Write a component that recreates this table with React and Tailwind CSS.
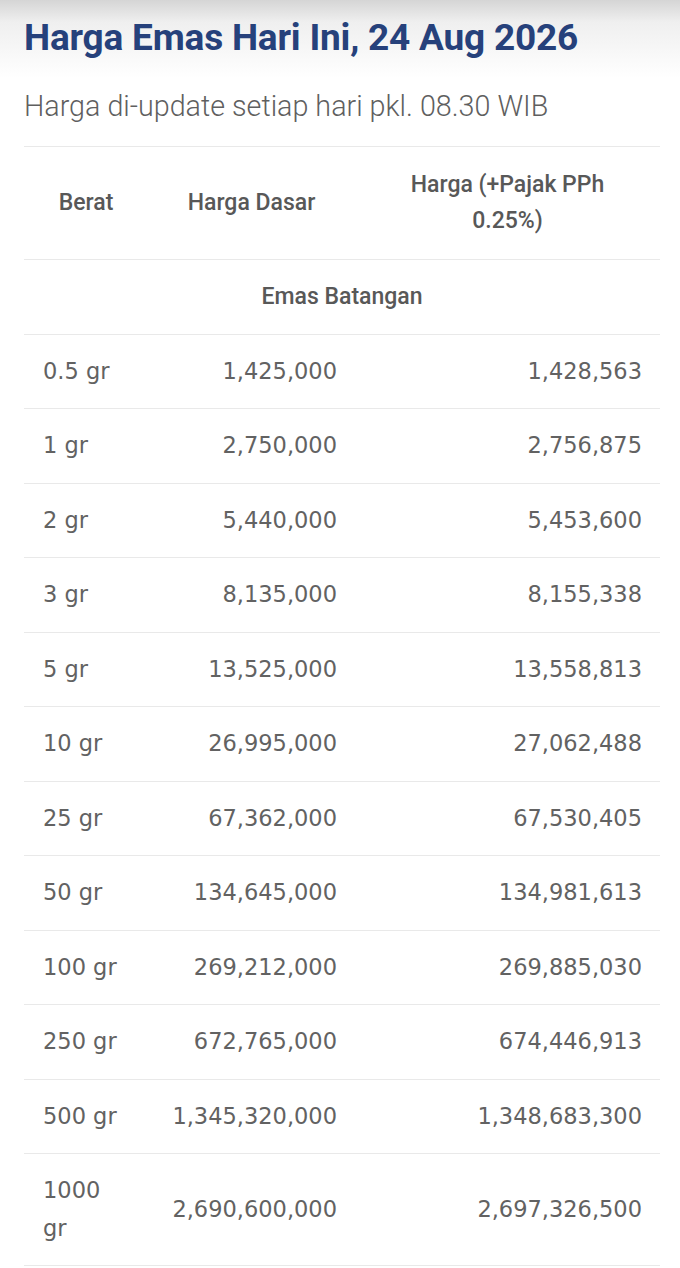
import React from 'react';

const rows = [
  ['0.5 gr', '1,425,000', '1,428,563'],
  ['1 gr', '2,750,000', '2,756,875'],
  ['2 gr', '5,440,000', '5,453,600'],
  ['3 gr', '8,135,000', '8,155,338'],
  ['5 gr', '13,525,000', '13,558,813'],
  ['10 gr', '26,995,000', '27,062,488'],
  ['25 gr', '67,362,000', '67,530,405'],
  ['50 gr', '134,645,000', '134,981,613'],
  ['100 gr', '269,212,000', '269,885,030'],
  ['250 gr', '672,765,000', '674,446,913'],
  ['500 gr', '1,345,320,000', '1,348,683,300'],
  ['1000 gr', '2,690,600,000', '2,697,326,500'],
];

export default function App() {
  return (
    <div className="min-h-screen bg-[linear-gradient(to_bottom,#d5d5d5_0px,#efefef_22px,#ffffff_78px)] pl-6 pr-5 pt-4 pb-8 font-['Roboto',sans-serif]">
      <h1 className="text-[37px] leading-[44px] font-bold text-[#26417b] tracking-[-0.2px]">
        Harga Emas Hari Ini, 24 Aug 2026
      </h1>
      <p className="mt-[29px] text-[28.7px] leading-[34px] font-light text-[#5f5f5f]">
        Harga di-update setiap hari pkl. 08.30 WIB
      </p>

      <table className="mt-[23px] w-full table-fixed border-collapse">
        <colgroup>
          <col className="w-[124px]" />
          <col className="w-[207px]" />
          <col />
        </colgroup>
        <thead>
          <tr className="border-t border-b border-[#e9e9e9] text-[23px] leading-[36px] text-[#585858]">
            <th className="px-[16px] py-[20px] text-center font-medium">Berat</th>
            <th className="px-[16px] py-[20px] text-center font-medium">Harga Dasar</th>
            <th className="px-[34px] py-[20px] text-center font-medium">Harga (+Pajak PPh 0.25%)</th>
          </tr>
        </thead>
        <tbody className="font-['DejaVu_Sans',sans-serif] text-[22.5px] leading-[37.5px] text-[#626262]">
          <tr className="border-b border-[#e9e9e9]">
            <td colSpan={3} className="py-[18px] text-center font-['Roboto',sans-serif] text-[23px] font-medium text-[#585858]">
              Emas Batangan
            </td>
          </tr>
          {rows.map(([berat, dasar, pajak]) => (
            <tr key={berat} className="border-b border-[#e9e9e9]">
              <td className="pl-[19px] pr-[24px] py-[18px]">{berat}</td>
              <td className="px-[18px] py-[18px] text-right">{dasar}</td>
              <td className="px-[18px] py-[18px] text-right">{pajak}</td>
            </tr>
          ))}
        </tbody>
      </table>
    </div>
  );
}
